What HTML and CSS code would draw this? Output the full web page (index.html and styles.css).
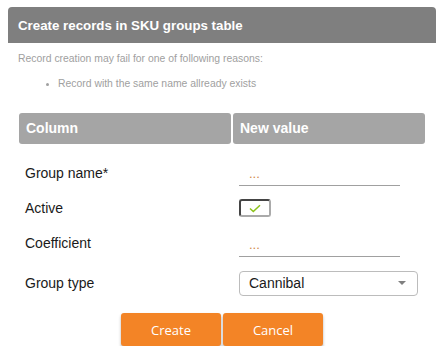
FILE: index.html
```html
<!DOCTYPE html>
<html lang="en">
<head>
  <meta charset="UTF-8" />
  <title>Create records</title>
  <link rel="stylesheet" href="styles.css">
</head>
<body>

  <div class="dialog">
    <!-- TITLE -->
    <div class="dialog-title">Create records in SKU groups table</div>

    <div class="notes">
      <p>Record creation may fail for one of following reasons:</p>
      <ul>
        <li>Record with the same name allready exists</li>
      </ul>
    </div>

    <!-- FORM TABLE -->
    <div class="grid">
      <div class="head">Column</div>
      <div class="head">New value</div>

      <div class="label row-1">Group name*</div>
      <div class="value row-1"><input type="text" class="line-input" placeholder="..." /></div>

      <div class="label row-2">Active</div>
      <div class="value row-2">
        <span class="check">
          <svg width="12" height="9" viewBox="0 0 12 9">
            <path d="M1 4.5 L4.3 7.5 L11 1.2" fill="none" stroke="#8cc21a" stroke-width="1.5"/>
          </svg>
        </span>
      </div>

      <div class="label row-3">Coefficient</div>
      <div class="value row-3"><input type="text" class="line-input" placeholder="..." /></div>

      <div class="label row-4">Group type</div>
      <div class="value row-4">
        <div class="select">
          <span>Cannibal</span>
          <span class="arrow"></span>
        </div>
      </div>
    </div>

    <div class="actions">
      <button class="btn">Create</button>
      <button class="btn">Cancel</button>
    </div>
  </div>

</body>
</html>
```

FILE: styles.css
```css
body {
  margin: 0;
  font-family: 'Liberation Sans', Arial, sans-serif;
  background-color: #ffffff;
  color: #1a1a1a;
}

.dialog {
  width: 428px;
  margin: 7px 8px 0;
}

.dialog-title {
  background-color: #7f7f7f;
  color: #ffffff;
  font-weight: bold;
  font-size: 13.3px;
  height: 36px;
  line-height: 38px;
  padding-left: 10px;
  border-radius: 4px 4px 0 0;
}

.notes {
  font-size: 10.4px;
  color: #a0a0a0;
  padding: 9px 10px 0;
}

.notes p {
  margin: 0;
  line-height: 14px;
}

.notes ul {
  margin: 11px 0 0;
  padding-left: 40px;
  line-height: 14px;
}

.notes li::marker {
  font-size: 9px;
}

.grid {
  display: grid;
  grid-template-columns: 212px 192px;
  column-gap: 2px;
  margin: 22px 0 0 11px;
}

.head {
  background-color: #a5a5a5;
  color: #ffffff;
  font-weight: bold;
  font-size: 14px;
  height: 31px;
  line-height: 31px;
  padding-left: 7px;
  border-radius: 3px;
  margin-bottom: 11px;
}

.label,
.value {
  display: flex;
  align-items: center;
  font-size: 14px;
  padding-left: 6px;
}

.row-1 { height: 36px; }
.row-2 { height: 34px; }
.row-3 { height: 36px; }
.row-4 { height: 44px; }

.row-3 .line-input {
  margin-top: 4px;
}

.line-input {
  width: 161px;
  height: 24px;
  box-sizing: border-box;
  border: none;
  border-bottom: 1px solid #a0a0a0;
  padding: 0 0 0 10px;
  margin-top: 2px;
  font-family: 'Liberation Sans', Arial, sans-serif;
  font-size: 13px;
  outline: none;
}

.line-input::placeholder {
  color: #d0884a;
  opacity: 1;
}

.check {
  width: 32px;
  height: 18px;
  box-sizing: border-box;
  border: 2px solid #aaaaaa;
  border-top-color: #444444;
  border-left-color: #444444;
  border-radius: 3px;
  display: flex;
  align-items: center;
  justify-content: center;
}

.select {
  width: 179px;
  height: 25px;
  box-sizing: border-box;
  border: 1px solid #bcbcbc;
  border-radius: 4px;
  display: flex;
  align-items: center;
  justify-content: space-between;
  padding: 0 11px 0 9px;
  font-size: 14px;
  color: #1a1a1a;
}

.arrow {
  width: 0;
  height: 0;
  border-left: 4px solid transparent;
  border-right: 4px solid transparent;
  border-top: 4px solid #808080;
}

.actions {
  display: flex;
  justify-content: center;
  gap: 2px;
  margin-top: 8px;
  margin-left: -8px;
  width: 444px;
}

.btn {
  width: 100px;
  height: 33px;
  background-color: #f38426;
  color: #ffffff;
  border: none;
  border-radius: 3px;
  font-family: 'Open Sans', sans-serif;
  font-size: 13px;
  box-shadow: 0 2px 3px rgba(0, 0, 0, 0.3);
  cursor: pointer;
}
```
